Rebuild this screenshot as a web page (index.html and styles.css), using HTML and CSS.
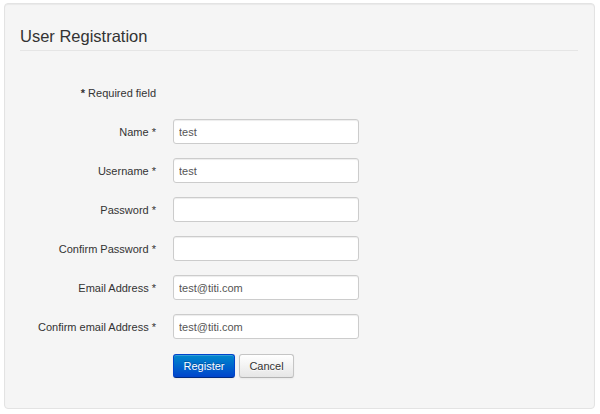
FILE: index.html
```html
<!DOCTYPE html>
<html>
<head>
<meta charset="utf-8">
<link rel="stylesheet" href="styles.css">
</head>
<body>
<div class="well">
  <h1 class="legend">User Registration</h1>
  <form class="form">
    <div class="row"><div class="label"><b>*</b> Required field</div></div>
    <div class="row"><label class="label">Name *</label><input class="input" type="text" value="test"></div>
    <div class="row"><label class="label">Username *</label><input class="input" type="text" value="test"></div>
    <div class="row"><label class="label">Password *</label><input class="input" type="password" value=""></div>
    <div class="row"><label class="label">Confirm Password *</label><input class="input" type="password" value=""></div>
    <div class="row"><label class="label">Email Address *</label><input class="input" type="text" value="test@titi.com"></div>
    <div class="row"><label class="label">Confirm email Address *</label><input class="input" type="text" value="test@titi.com"></div>
    <div class="row"><span class="label"></span><div class="buttons"><button type="button" class="btn btn-primary">Register</button><button type="button" class="btn">Cancel</button></div></div>
  </form>
</div>
</body>
</html>
```

FILE: styles.css
```css
html, body { margin: 0; padding: 0; background: #fff; }
body {
  font-family: "Liberation Sans", Arial, Helvetica, sans-serif;
  font-size: 11px;
  color: #333;
  padding: 3px 5px 5px 4px;
}
.well {
  background: #f5f5f5;
  border: 1px solid #e3e3e3;
  border-radius: 4px;
  box-shadow: inset 0 1px 1px rgba(0,0,0,0.05);
  padding: 15px 16px 30px 15px;
  height: 406px;
  box-sizing: border-box;
}
.legend {
  margin: 0;
  font-size: 16.5px;
  font-weight: normal;
  line-height: 26px;
  padding-top: 4px;
  color: #333;
  border-bottom: 1px solid #e5e5e5;
  padding-bottom: 1px;
}
.form { display: flex; flex-direction: column; gap: 14px; margin-top: 29px; }
.row { display: flex; align-items: center; gap: 17px; height: 25px; }
.label { width: 136px; text-align: right; flex: none; }
.input {
  box-sizing: border-box;
  width: 186px;
  height: 25px;
  margin: 0;
  padding: 2px 5px;
  border: 1px solid #ccc;
  border-radius: 3px;
  background: #fff;
  box-shadow: inset 0 1px 1px rgba(0,0,0,0.075);
  font-family: "Liberation Sans", Arial, sans-serif;
  font-size: 11px;
  color: #555;
  outline: none;
}
.buttons { display: flex; gap: 4px; }
.btn {
  box-sizing: border-box;
  height: 24px;
  padding: 0 6px;
  font-family: "Liberation Sans", Arial, sans-serif;
  font-size: 11px;
  color: #333;
  background: linear-gradient(#ffffff, #e6e6e6);
  border: 1px solid #c5c5c5;
  border-bottom-color: #b3b3b3;
  border-radius: 3px;
  box-shadow: inset 0 1px 0 rgba(255,255,255,0.2), 0 1px 2px rgba(0,0,0,0.05);
  text-shadow: 0 1px 1px rgba(255,255,255,0.75);
  width: 55px;
}
.btn-primary {
  width: 62px;
  color: #fff;
  background: linear-gradient(#0088cc, #0044cc);
  border-color: #0044cc #0044cc #002a80;
  text-shadow: 0 -1px 0 rgba(0,0,0,0.25);
}
```
